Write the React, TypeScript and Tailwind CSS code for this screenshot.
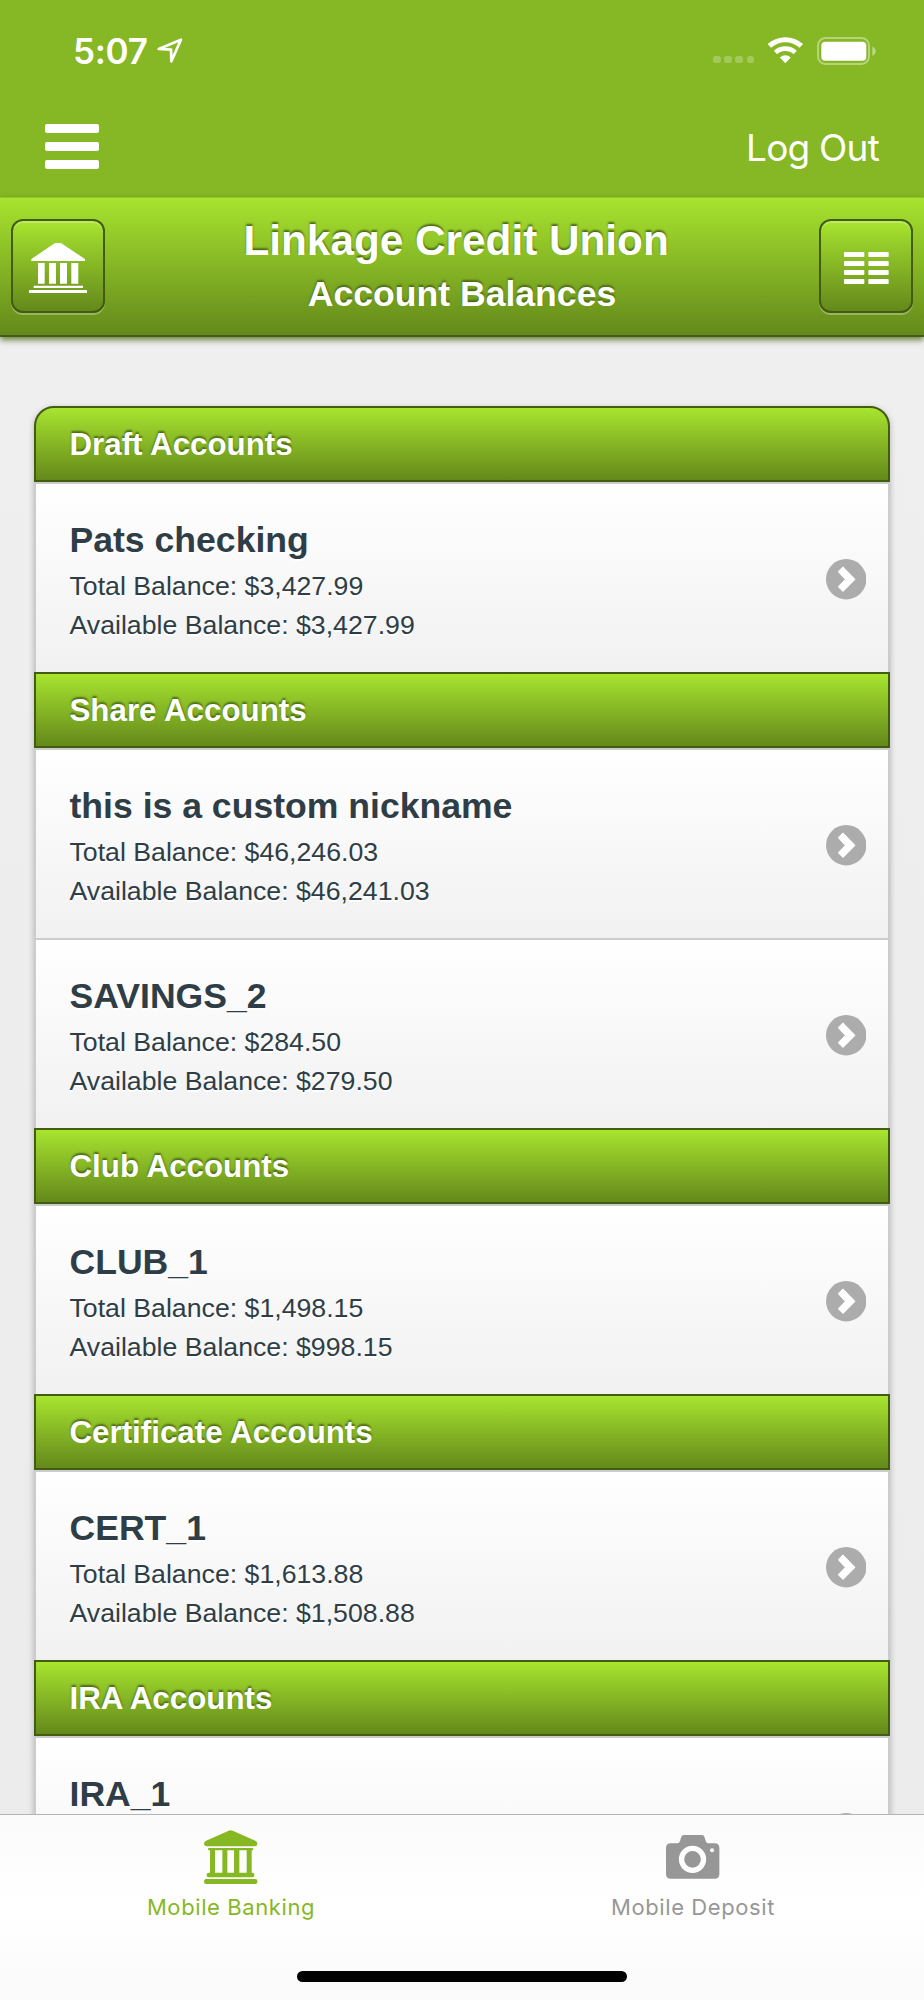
import React from "react";

type Account = { name: string; total?: string; available?: string };
type Section = { title: string; accounts: Account[] };

const sections: Section[] = [
  {
    title: "Draft Accounts",
    accounts: [{ name: "Pats checking", total: "$3,427.99", available: "$3,427.99" }],
  },
  {
    title: "Share Accounts",
    accounts: [
      { name: "this is a custom nickname", total: "$46,246.03", available: "$46,241.03" },
      { name: "SAVINGS_2", total: "$284.50", available: "$279.50" },
    ],
  },
  {
    title: "Club Accounts",
    accounts: [{ name: "CLUB_1", total: "$1,498.15", available: "$998.15" }],
  },
  {
    title: "Certificate Accounts",
    accounts: [{ name: "CERT_1", total: "$1,613.88", available: "$1,508.88" }],
  },
  {
    title: "IRA Accounts",
    accounts: [{ name: "IRA_1" }],
  },
];

const StatusBar = () => (
  <div className="flex h-[101px] items-center justify-between pl-[73px] pr-[47px] text-white">
    <div className="flex items-center gap-[9px]">
      <span className="font-['Inter',sans-serif] text-[35px] font-semibold leading-[40px] tracking-[-0.3px]">5:07</span>
      <svg width="26" height="25" viewBox="0 0 76 73" fill="none" stroke="white" strokeWidth="8" strokeLinejoin="round">
        <path d="M5 32 L70 5 L42 68 L41 34 Z" />
      </svg>
    </div>
    <div className="flex items-center">
      <div className="mr-[14px] mt-[18px] flex gap-[3.6px]">
        {[0, 1, 2, 3].map((i) => (
          <span key={i} className="size-[7.5px] rounded-[2.5px] bg-white/25" />
        ))}
      </div>
      <svg width="35" height="26.3" viewBox="0 0 105 79" fill="none" stroke="white" className="mr-[14px]">
        <path d="M4 26.7 A71 71 0 0 1 100 26.7" strokeWidth="15" />
        <path d="M22.3 46.6 A44 44 0 0 1 81.7 46.6" strokeWidth="14" />
        <path d="M52 79 L35.8 61.3 A24 24 0 0 1 68.2 61.3 Z" fill="white" stroke="none" />
      </svg>
      <svg width="60" height="28" viewBox="0 0 60 28">
        <rect x="1" y="1" width="51" height="26" rx="7.5" fill="none" stroke="white" strokeOpacity="0.4" strokeWidth="2" />
        <rect x="4.3" y="4.7" width="45" height="19" rx="4" fill="white" />
        <path d="M55.3 9.5 C59.8 11.5 59.8 16.8 55.3 18.8 Z" fill="white" fillOpacity="0.45" />
      </svg>
    </div>
  </div>
);

const NavBar = () => (
  <div className="flex h-[96px] items-start justify-between px-[45px] pt-[23px]">
    <button className="flex flex-col gap-[9px]">
      <span className="h-[9px] w-[54px] rounded-[2px] bg-white" />
      <span className="h-[9px] w-[54px] rounded-[2px] bg-white" />
      <span className="h-[9px] w-[54px] rounded-[2px] bg-white" />
    </button>
    <button className="mt-[2px] font-['Inter',sans-serif] text-[37px] font-normal leading-[44px] tracking-[-0.8px] text-white">Log Out</button>
  </div>
);

const IconButton = ({ children }: { children: React.ReactNode }) => (
  <button className="flex size-[94px] items-center justify-center rounded-[12px] border-2 border-[#425c10] bg-linear-to-b from-[#a8e52f] to-[#64891b] pt-[3px] shadow-[0_2px_0_rgba(255,255,255,0.3),inset_0_2px_0_rgba(255,255,255,0.25)]">
    {children}
  </button>
);

const BankButtonIcon = () => (
  <svg width="58.3" height="50" viewBox="0 0 175 150" fill="white">
    <path d="M7 54 V48 L77 1 Q79 0 82 0 H92 Q95 0 97 1 L168 48 V54 Z" />
    <path d="M27 60 h20 v62 h-20 z M60 60 h21 v62 h-21 z M93 60 h21 v62 h-21 z M127 60 h21 v62 h-21 z" />
    <path d="M14 128 h148 v7 h-148 z M0 141 h175 v9 h-175 z" />
  </svg>
);

const ListIcon = () => (
  <svg width="45" height="32" viewBox="0 0 135 96" fill="white" className="ml-[1px]">
    {[0, 27, 54, 81].map((y) => (
      <g key={y}>
        <rect x="0" y={y} width="61" height="15" rx="2" />
        <rect x="73" y={y} width="61" height="15" rx="2" />
      </g>
    ))}
  </svg>
);

const Banner = () => (
  <div className="relative flex h-[140px] justify-between border-b-2 border-b-[#425c10] bg-linear-to-b from-[#a8e52f] to-[#64891b] px-[11px] shadow-[0_3px_6px_rgba(60,90,10,0.75),inset_0_1px_0_rgba(100,140,30,0.35)]">
    <div className="pt-[22px]">
      <IconButton>
        <BankButtonIcon />
      </IconButton>
    </div>
    <div className="pt-[18px] text-center font-bold text-white [text-shadow:0_-2px_2px_#4b6a12]">
      <h1 className="text-[42.3px] leading-[52px]">Linkage Credit Union&nbsp;</h1>
      <h2 className="text-[35.6px] leading-[54px]">Account Balances</h2>
    </div>
    <div className="pt-[22px]">
      <IconButton>
        <ListIcon />
      </IconButton>
    </div>
  </div>
);

const Chevron = () => (
  <svg width="40.4" height="40.4" viewBox="0 0 121 121" className="mt-[75.4px] shrink-0">
    <circle cx="60.5" cy="60.5" r="60.5" fill="#acacac" />
    <path d="M38 38 L51 25 L86 61 L51 96 L38 83 L59 61 Z" fill="white" stroke="white" strokeWidth="4" strokeLinejoin="round" />
  </svg>
);

const AccountRow = ({ account }: { account: Account }) => (
  <div className="flex h-[190px] justify-between border-x-2 border-t-2 border-[#ccc] bg-linear-to-b from-white to-[#f1f1f1] pl-[33.5px] pr-[22px] text-[#2f3e46] [text-shadow:0_2px_0_#fff]">
    <div className="pt-[34px]">
      <h3 className="text-[35.6px] font-bold leading-[44px]">{account.name}</h3>
      {account.total && <p className="mt-[5px] text-[26.7px] leading-[39px]">Total Balance: {account.total}</p>}
      {account.available && <p className="text-[26.7px] leading-[39px]">Available Balance: {account.available}</p>}
    </div>
    <Chevron />
  </div>
);

const AccountList = () => (
  <div className="mx-[34px] mt-[69px] rounded-t-[20px] shadow-[0_2px_6px_rgba(0,0,0,0.25)]">
    {sections.map((section) => (
      <section key={section.title} className="group">
        <div className="flex h-[76px] items-center border-2 border-[#425c10] bg-linear-to-b from-[#a8e52f] to-[#64891b] pl-[33.5px] pt-[2px] group-first:rounded-t-[20px]">
          <h2 className="text-[31.3px] font-bold text-white [text-shadow:0_-2px_2px_#4b6a12]">{section.title}</h2>
        </div>
        {section.accounts.map((account) => (
          <AccountRow key={account.name} account={account} />
        ))}
      </section>
    ))}
  </div>
);

const BankTabIcon = () => (
  <svg width="53.4" height="54" viewBox="0 0 160 162" fill="currentColor">
    <path d="M74 2 Q80 -1 86 2 L154 32 Q160 35 160 40 Q160 49 152 49 H8 Q0 49 0 40 Q0 35 6 32 Z" />
    <rect x="12" y="54" width="136" height="7" rx="3" />
    <path d="M18 60 h15 v70 h-15 z M55 60 h15 v70 h-15 z M90 60 h16 v70 h-16 z M128 60 h15 v70 h-15 z" />
    <rect x="8" y="128" width="143" height="14" rx="6" />
    <rect x="0" y="147" width="160" height="15" rx="6" />
  </svg>
);

const CameraIcon = () => (
  <svg width="53.4" height="43.7" viewBox="0 0 160 131">
    <path
      fill="currentColor"
      d="M14 25 H33 Q39 25 41 20 L46 5 Q48 0 53 0 H108 Q113 0 115 5 L120 20 Q122 25 128 25 H146 Q160 25 160 39 V117 Q160 131 146 131 H14 Q0 131 0 117 V39 Q0 25 14 25 Z"
    />
    <circle cx="79.5" cy="73" r="33" fill="none" stroke="white" strokeWidth="16" />
    <circle cx="138" cy="46" r="6" fill="white" />
  </svg>
);

const TabBar = () => (
  <div className="flex h-[186px] flex-col items-center border-t border-[#b4b4b4] bg-linear-to-b from-[#fbfbfb] via-white to-[#fafafa] font-['Inter',sans-serif] text-[22px] leading-[28px]">
    <div className="flex w-full pt-[15px]">
      <button className="flex flex-1 flex-col items-center text-[#86b824]">
        <BankTabIcon />
        <span className="mt-[9px] tracking-[0.6px]">Mobile Banking</span>
      </button>
      <button className="flex flex-1 flex-col items-center text-[#979797]">
        <span className="flex h-[54px] items-center">
          <CameraIcon />
        </span>
        <span className="mt-[9px] tracking-[0.6px]">Mobile Deposit</span>
      </button>
    </div>
    <div className="mb-[18px] mt-auto h-[11px] w-[330px] rounded-full bg-black" />
  </div>
);

const App = () => {
  return (
    <div className="flex h-[2000px] w-[924px] flex-col overflow-hidden bg-linear-to-b from-[#f0f0f0] to-[#ebebeb] font-['Liberation_Sans',Arial,sans-serif]">
      <header className="shrink-0 bg-[#86b724]">
        <StatusBar />
        <NavBar />
        <Banner />
      </header>
      <main className="min-h-0 flex-1 overflow-hidden">
        <AccountList />
      </main>
      <TabBar />
    </div>
  );
};

export default App;
